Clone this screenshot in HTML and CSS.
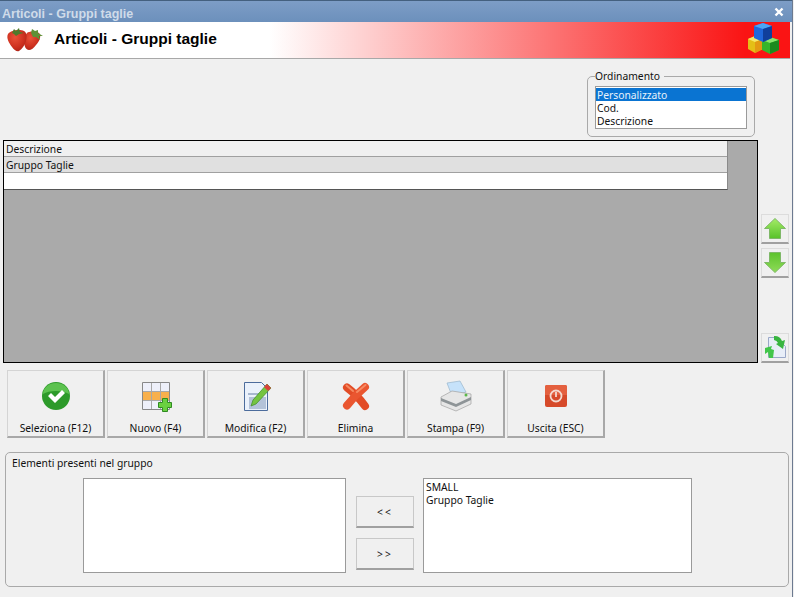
FILE: index.html
```html
<!DOCTYPE html>
<html lang="it">
<head>
<meta charset="utf-8">
<title>Articoli - Gruppi taglie</title>
<link rel="stylesheet" href="styles.css">
</head>
<body>
<div class="window">
  <div class="titlebar">
    <span class="title-text">Articoli - Gruppi taglie</span>
    <svg class="close" width="10" height="10" viewBox="0 0 10 10"><path d="M1.500 1.500l7 7M8.500 1.500l-7 7" stroke="#fff" stroke-width="2.400"/></svg>
  </div>
  <div class="banner">
    <svg class="berries" width="37" height="26" viewBox="0 0 37 26">
      <defs>
        <radialGradient id="berry" cx=".4" cy=".35" r=".8"><stop offset="0" stop-color="#ea5138"/><stop offset=".6" stop-color="#cc2f1e"/><stop offset="1" stop-color="#9c1f14"/></radialGradient>
      </defs>
      <path d="M21 6c2-2 9-2 12 0 3 3 0 9-3 12-2 3-5 5-7 5-3 0-5-4-5-9 0-3 1-6 3-8z" fill="url(#berry)"/>
      <path d="M2 7c3-4 12-5 16-3 3 2 3 6 2 10-1 4-4 8-7 10-2 1-5-1-7-4C3 16 0 11 2 7z" fill="url(#berry)"/>
      <path d="M6 6l2-4 2 2 3-3 1 4 4 1-5 1-3 2-2-2z" fill="#4f7a2b"/>
      <path d="M25 6l1-4 3 2 3-1 0 3 5 3-4 0 1 4-4-3-3 0z" fill="#5f8f35"/>
    </svg>
    <h1 class="banner-title">Articoli - Gruppi taglie</h1>
    <svg class="cubes" width="31" height="31" viewBox="0 0 31 31" stroke-linejoin="round">
      <path d="M15 16l-8-3-7 3v10l7 4 8-4z" fill="#e4bf16"/>
      <path d="M0 16l7 3 8-3-8-3z" fill="#f7e869"/>
      <path d="M7 19v11l8-4V16z" fill="#e39a12"/>
      <path d="M14 17l8-3 9 3v10l-9 4-8-4z" fill="#36b52a"/>
      <path d="M14 17l8 3 9-3-9-3z" fill="#8ae66c"/>
      <path d="M22 20v11l9-4V17z" fill="#1c8a1e"/>
      <path d="M6 3l9-3 9 3v12l-9 4-9-4z" fill="#1f68dc"/>
      <path d="M6 3l9 3 9-3-9-3z" fill="#4da5f5"/>
      <path d="M15 6v13l9-4V3z" fill="#103f9c"/>
    </svg>
  </div>
  <div class="content">
    <div class="sort-row">
      <fieldset class="sort-box">
        <legend class="sort-legend">Ordinamento</legend>
        <ul class="listbox sort-list">
          <li class="selected">Personalizzato</li>
          <li>Cod.</li>
          <li>Descrizione</li>
        </ul>
      </fieldset>
    </div>
    <div class="grid-row">
      <div class="grid">
        <div class="table">
          <div class="cell head">Descrizione</div>
          <div class="cell current">Gruppo Taglie</div>
          <div class="cell blank"></div>
        </div>
      </div>
      <div class="side">
        <button class="side-btn" type="button" aria-label="Su">
          <svg width="22" height="21" viewBox="0 0 22 21"><defs><linearGradient id="up" x1="0" y1="0" x2="0" y2="1"><stop offset="0" stop-color="#a4ec66"/><stop offset="1" stop-color="#58c22a"/></linearGradient></defs><path d="M11 .5L21.500 10.500H16.500V20.500H5.500V10.500H.5z" fill="url(#up)" stroke="#7fb868"/></svg>
        </button>
        <button class="side-btn" type="button" aria-label="Giù">
          <svg width="22" height="21" viewBox="0 0 22 21"><defs><linearGradient id="down" x1="0" y1="0" x2="0" y2="1"><stop offset="0" stop-color="#5cc22c"/><stop offset="1" stop-color="#8fdc58"/></linearGradient></defs><path d="M11 20.500L21.500 10.500H16.500V.5H5.500V10.500H.5z" fill="url(#down)" stroke="#7fb868"/></svg>
        </button>
        <button class="side-btn side-refresh" type="button" aria-label="Aggiorna">
          <svg width="24" height="25" viewBox="0 0 24 25">
            <path d="M5.500 2.500h8l9 9v11h-17z" fill="#e8eef8" stroke="#9aa8c8"/>
            <path d="M11 1a8 8 0 0 1 8 5l3-1-2 9-7-5 2-1a5 5 0 0 0-4-3z" fill="#38b540"/>
            <path d="M2 13l7-2-1 3 3 1-1 8H6l-1-6-3 2z" fill="#42c64a"/>
          </svg>
        </button>
      </div>
    </div>
    <div class="toolbar">
      <button class="tool" type="button">
        <svg width="32" height="32" viewBox="0 0 32 32"><circle cx="16" cy="16" r="14" fill="#2d9a2a"/><path d="M3 14a13 11 0 0 1 26 0c-6-4-20-4-26 0z" fill="#5cc24f"/><path d="M8 16l3-3 4 4 7-7 3 3-10 10z" fill="#fff"/></svg>
        <span>Seleziona (F12)</span>
      </button>
      <button class="tool" type="button">
        <svg width="32" height="32" viewBox="0 0 32 32">
          <path d="M2.500 2.500h27v27h-27z" fill="#eef0fa" stroke="#888"/>
          <path d="M3 12h26v8H3z" fill="#f8b04c"/>
          <path d="M11.500 3v26M20.500 3v26M3 11.500h26M3 20.500h26" stroke="#a8a8a8"/>
          <path d="M22.500 18.500h5v4h4v5h-4v4h-5v-4h-4v-5h4z" fill="#6ad040" stroke="#2f8a22"/>
        </svg>
        <span>Nuovo (F4)</span>
      </button>
      <button class="tool" type="button">
        <svg width="32" height="32" viewBox="0 0 32 32">
          <path d="M4.500 2.500h17l6 6v22h-23z" fill="#eaf1fb" stroke="#4c6c9c"/>
          <path d="M9 17h17v12H9z" fill="#b3c2d8"/>
          <path d="M8 13h12v2H8z" fill="#a8b8d0"/>
          <path d="M27 4l4 4-15 16-5 2 2-6z" fill="#74c440" stroke="#3d8a26" stroke-width=".7"/>
          <path d="M27 4l4 4-3 3-4-4z" fill="#d9403a"/>
        </svg>
        <span>Modifica (F2)</span>
      </button>
      <button class="tool" type="button">
        <svg width="32" height="32" viewBox="0 0 32 32" fill="none" stroke-linecap="round">
          <path d="M7 7.500C13 12 20 19 25 26" stroke="#e24c26" stroke-width="8"/>
          <path d="M25 7C19 12 12 19 7 25.500" stroke="#ea5630" stroke-width="8"/>
          <path d="M6.500 5.500L13 11M25.500 5L17 12" stroke="#f68a62" stroke-width="2"/>
        </svg>
        <span>Elimina</span>
      </button>
      <button class="tool" type="button">
        <svg width="32" height="32" viewBox="0 0 32 32">
          <path d="M7 3l13-2 6 11-14 4z" fill="#c6e2fa" stroke="#9ab6cc" stroke-width=".7"/>
          <path d="M1 17l11-6 19 3v10l-15 7-15-6z" fill="#e6e6e6" stroke="#a0a0a0" stroke-width=".7"/>
          <path d="M1 18l15 6 15-7v3l-15 7-15-6z" fill="#8e9497"/>
          <circle cx="26" cy="15" r="1.500" fill="#5ab84a"/>
        </svg>
        <span>Stampa (F9)</span>
      </button>
      <button class="tool" type="button">
        <svg width="32" height="32" viewBox="0 0 32 32">
          <rect x="5" y="5" width="22" height="22" rx="2" fill="#d64a2a"/>
          <path d="M5 7a2 2 0 0 1 2-2h18a2 2 0 0 1 2 2v8H5z" fill="#e4603f"/>
          <circle cx="16" cy="16" r="5.500" fill="none" stroke="#f3d9cf" stroke-width="1.800"/>
          <path d="M16 12v5" stroke="#f3d9cf" stroke-width="1.800"/>
        </svg>
        <span>Uscita (ESC)</span>
      </button>
    </div>
    <fieldset class="group">
      <div class="group-label">Elementi presenti nel gruppo</div>
      <div class="transfer">
        <ul class="listbox left-list"></ul>
        <div class="transfer-btns">
          <button class="move" type="button">&lt;&lt;</button>
          <button class="move" type="button">&gt;&gt;</button>
        </div>
        <ul class="listbox right-list">
          <li>SMALL</li>
          <li>Gruppo Taglie</li>
        </ul>
      </div>
    </fieldset>
  </div>
</div>
</body>
</html>
```
FILE: styles.css
```css
* { box-sizing: border-box; }
html, body { margin: 0; padding: 0; }
body {
  width: 794px;
  height: 597px;
  overflow: hidden;
  background: #f0f0f0;
  font-family: "Noto Sans", "Liberation Sans", Arial, sans-serif;
  font-size: 10.300px;
  color: #111;
}
.window {
  width: 793px;
  height: 597px;
  border-right: 1px solid #6c7a90;
  display: flex;
  flex-direction: column;
}
.titlebar {
  height: 22px;
  flex: none;
  padding: 5px 8px 0 2px;
  display: flex;
  justify-content: space-between;
  border-top: 1px solid #44607f;
  background: linear-gradient(#7d9dc6, #6c90bc);
}
.title-text {
  font-family: "Liberation Sans", Arial, sans-serif;
  font-size: 12.500px;
  font-weight: bold;
  color: #cfdbe9;
  line-height: 16px;
}
.close { margin-top: 1px; }
.banner {
  height: 37px;
  flex: none;
  width: 790px;
  display: flex;
  align-items: center;
  padding: 0 11px 0 6px;
  border-bottom: 1px solid #a8a8a8;
  background: linear-gradient(90deg, #fff 0, #fff 270px, #fa1414 745px);
}
.berries { flex: none; }
.banner-title {
  margin: 0 0 2px 11px;
  flex: 1;
  font-family: "Liberation Sans", Arial, sans-serif;
  font-size: 15.500px;
  font-weight: bold;
  color: #000;
}
.cubes { flex: none; margin-top: -4px; }
.content { flex: 1; padding: 0 0 0 3px; display: flex; flex-direction: column; }
.sort-row { display: flex; justify-content: flex-end; padding: 10px 37px 0 0; height: 81px; flex: none; }
.sort-box {
  width: 168px;
  height: 68px;
  margin: 0;
  padding: 0 7px;
  border: 1px solid #a9a9a9;
  border-radius: 5px;
}
.sort-legend { padding: 0 4px 0 0; font-size: 10.300px; line-height: 14px; }
.listbox {
  list-style: none;
  margin: 0;
  padding: 0;
  background: #fff;
  border: 1px solid #9a9a9a;
}
.listbox li { line-height: 13px; height: 13px; }
.sort-list { width: 152px; height: 43px; padding: 1px 0; margin-top: 3px; }
.sort-list li { padding: 1px 0 0 1px; }
.sort-list .selected { background: #0a74d2; color: #e8f2fb; }
.grid-row { display: flex; height: 223px; flex: none; }
.grid { width: 755px; height: 223px; background: #aaa; border: 1px solid #000; flex: none; }
.table { width: 724px; border-right: 1px solid #8a8a8a; border-bottom: 1px solid #555; background: #fff; }
.cell { height: 16px; padding: 1px 2px; line-height: 14px; border-bottom: 1px solid #a0a0a0; color: #111; }
.head { background: #f0f0f0; }
.current { background: #e0e0e0; }
.blank { background: #fff; border-bottom: 0; }
.side { flex: none; width: 32px; padding: 74px 0 0 3px; display: flex; flex-direction: column; }
.side-btn {
  flex: none;
  width: 28px;
  height: 30px;
  padding: 0;
  margin-bottom: 4px;
  background: #f0f0f0;
  border: 1px solid #dcdcdc;
  border-bottom: 2px solid #a0a0a0;
  display: flex;
  align-items: center;
  justify-content: center;
}
.side-refresh { margin-top: 51px; margin-bottom: 0; }
.toolbar { display: flex; gap: 2px; padding: 7px 0 0 4px; height: 89px; flex: none; }
.tool {
  width: 98px;
  height: 68px;
  padding: 9px 0 0;
  background: #f0f0f0;
  border: 1px solid #d4d4d4;
  border-right: 2px solid #a8a8a8;
  border-bottom: 2px solid #a8a8a8;
  font: inherit;
  line-height: 14px;
  color: #111;
  display: flex;
  flex-direction: column;
  align-items: center;
  gap: 9px;
}
.tool svg { flex: none; }
.group {
  width: 784px;
  height: 135px;
  margin: 0 0 0 2px;
  padding: 3px 6px 0;
  border: 1px solid #a9a9a9;
  border-radius: 5px;
}
.group-label { line-height: 14px; }
.transfer { display: flex; margin: 8px 0 0 71px; }
.left-list { width: 263px; height: 95px; }
.right-list { width: 269px; height: 95px; padding: 2px; }
.transfer-btns { width: 77px; padding: 18px 0 0 10px; display: flex; flex-direction: column; gap: 10px; }
.move {
  width: 58px;
  height: 32px;
  padding: 0;
  background: #f0f0f0;
  border: 1px solid #c8c8c8;
  border-bottom: 2px solid #a0a0a0;
  font: inherit;
  letter-spacing: 2px;
  color: #111;
}
```
